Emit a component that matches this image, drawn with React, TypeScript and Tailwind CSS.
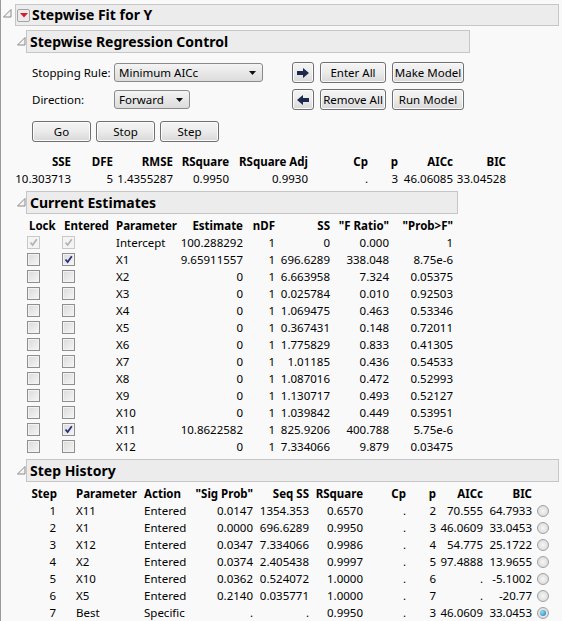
import React from 'react';

const statCols = 'grid grid-cols-[53px_42px_60px_56px_79px_60px_30px_55px_53px]';
const estCols = 'grid grid-cols-[35px_54px_68px_59px_32px_55px_59px_64px]';
const histCols = 'grid grid-cols-[30px_87px_56px_53px_56px_54px_43px_30px_47px_49px_17px]';

const estimates = [
  { name: 'Intercept', est: '100.288292', ss: '0', f: '0.000', p: '1', lock: 'disabled', entered: 'disabled' },
  { name: 'X1', est: '9.65911557', ss: '696.6289', f: '338.048', p: '8.75e-6', entered: 'on' },
  { name: 'X2', est: '0', ss: '6.663958', f: '7.324', p: '0.05375' },
  { name: 'X3', est: '0', ss: '0.025784', f: '0.010', p: '0.92503' },
  { name: 'X4', est: '0', ss: '1.069475', f: '0.463', p: '0.53346' },
  { name: 'X5', est: '0', ss: '0.367431', f: '0.148', p: '0.72011' },
  { name: 'X6', est: '0', ss: '1.775829', f: '0.833', p: '0.41305' },
  { name: 'X7', est: '0', ss: '1.01185', f: '0.436', p: '0.54533' },
  { name: 'X8', est: '0', ss: '1.087016', f: '0.472', p: '0.52993' },
  { name: 'X9', est: '0', ss: '1.130717', f: '0.493', p: '0.52127' },
  { name: 'X10', est: '0', ss: '1.039842', f: '0.449', p: '0.53951' },
  { name: 'X11', est: '10.8622582', ss: '825.9206', f: '400.788', p: '5.75e-6', entered: 'on' },
  { name: 'X12', est: '0', ss: '7.334066', f: '9.879', p: '0.03475' },
];

const history = [
  ['1', 'X11', 'Entered', '0.0147', '1354.353', '0.6570', '.', '2', '70.555', '64.7933'],
  ['2', 'X1', 'Entered', '0.0000', '696.6289', '0.9950', '.', '3', '46.0609', '33.0453'],
  ['3', 'X12', 'Entered', '0.0347', '7.334066', '0.9986', '.', '4', '54.775', '25.1722'],
  ['4', 'X2', 'Entered', '0.0374', '2.405438', '0.9997', '.', '5', '97.4888', '13.9655'],
  ['5', 'X10', 'Entered', '0.0362', '0.524072', '1.0000', '.', '6', '.', '-5.1002'],
  ['6', 'X5', 'Entered', '0.2140', '0.035771', '1.0000', '.', '7', '.', '-20.77'],
  ['7', 'Best', 'Specific', '.', '.', '0.9950', '.', '3', '46.0609', '33.0453'],
];

function Disclosure() {
  return (
    <svg width="9" height="9" viewBox="0 0 9 9">
      <polygon points="8,0.5 8,8 0.5,8" fill="#f4f4f4" stroke="#8a8a8a" strokeWidth="1" />
    </svg>
  );
}

function RedMenu() {
  return (
    <div className="w-[13px] h-[13px] rounded-[2px] border border-[#a4a4a4] bg-[#ececec] flex items-center justify-center">
      <svg width="8" height="5" viewBox="0 0 8 5">
        <polygon points="0,0 8,0 4,4.5" fill="#d4202c" />
      </svg>
    </div>
  );
}

function Section({ title, width, children }: { title: string; width: string; children: React.ReactNode }) {
  return (
    <div>
      <div className="flex">
        <div className="w-[9px] pt-[7px]">
          <Disclosure />
        </div>
        <div className={`${width} h-[23px] flex items-center pl-[3px] border border-[#c6c6c6] bg-[#ececec]`}>
          <span className="font-bold text-[14px]">{title}</span>
        </div>
      </div>
      {children}
    </div>
  );
}

function Button({ children, w }: { children: React.ReactNode; w: string }) {
  return (
    <div className={`${w} h-[21px] flex items-center justify-center rounded-[3px] border border-[#707070] bg-linear-to-b from-[#f4f4f4] via-[#ebebeb] to-[#d8d8d8] shadow-[inset_0_0_0_1px_#fbfbfb]`}>
      {children}
    </div>
  );
}

function Select({ label, w }: { label: string; w: string }) {
  return (
    <div className={`${w} h-[19px] flex items-center justify-between pl-[4px] pr-[6px] rounded-[3px] border border-[#8a8a8a] bg-linear-to-b from-[#f4f4f4] to-[#dcdcdc]`}>
      <span>{label}</span>
      <svg width="7" height="4" viewBox="0 0 7 4">
        <polygon points="0,0 7,0 3.5,4" fill="#111" />
      </svg>
    </div>
  );
}

function Arrow({ left }: { left?: boolean }) {
  return (
    <svg width="12" height="10" viewBox="0 0 12 10" className={left ? 'scale-x-[-1]' : ''}>
      <polygon points="0,3 6,3 6,0 12,5 6,10 6,7 0,7" fill="#1b2a4c" />
    </svg>
  );
}

function Checkbox({ state }: { state?: string }) {
  const disabled = state === 'disabled';
  return (
    <div
      className={`w-[13px] h-[13px] flex items-center justify-center border ${
        disabled ? 'border-[#c8c8c8] bg-[#f4f4f4]' : 'border-[#8f8f8f] bg-linear-to-br from-[#dadada] to-[#f6f6f6] shadow-[inset_0_0_0_1px_#f2f2f2]'
      }`}
    >
      {state && (
        <svg width="9" height="9" viewBox="0 0 9 9">
          <path d="M1.5 4.5 L3.6 7 L7.8 1.2" fill="none" stroke={disabled ? '#b4b4b4' : '#27307a'} strokeWidth="1.8" />
        </svg>
      )}
    </div>
  );
}

function Radio({ on }: { on?: boolean }) {
  return (
    <div className="w-[12px] h-[12px] rounded-full border border-[#a0a0a0] bg-radial from-[#f6f6f6] to-[#d4d4d4] flex items-center justify-center">
      {on && <div className="w-[6px] h-[6px] rounded-full bg-radial-[at_35%_35%] from-[#8fe0f8] to-[#1b78a8]" />}
    </div>
  );
}

export default function App() {
  return (
    <div className="w-[562px] h-[621px] overflow-hidden bg-[#f9f9f9] shadow-[inset_1px_0_0_#9a9a9a] text-[11.5px] leading-none text-black font-['Noto_Sans',sans-serif]">
      <div className="pt-[4px]">
        {/* Outline title */}
        <div className="flex">
          <div className="w-[15px] pl-[3px] pt-[5px]">
            <Disclosure />
          </div>
          <div className="w-[544px] h-[22px] flex items-center gap-[2px] pl-[1px] border border-[#c6c6c6] bg-[#ececec]">
            <RedMenu />
            <span className="font-bold text-[14px]">Stepwise Fit for Y</span>
          </div>
        </div>

        <div className="pl-[17px] pt-[4px] flex flex-col gap-[4px]">
          <Section title="Stepwise Regression Control" width="w-[444px]">
            <div className="ml-[15px] mt-[9px]">
              <div className="flex">
                <div className="w-[260px]">
                  <div className="flex items-center h-[21px]">
                    <span className="w-[82px]">Stopping Rule:</span>
                    <Select label="Minimum AICc" w="w-[149px]" />
                  </div>
                  <div className="flex items-center h-[21px] mt-[6px]">
                    <span className="w-[82px]">Direction:</span>
                    <Select label="Forward" w="w-[76px]" />
                  </div>
                </div>
                <div className="flex flex-col gap-[6px]">
                  <div className="flex gap-[6px]">
                    <Button w="w-[22px]"><Arrow /></Button>
                    <Button w="w-[66px]">Enter All</Button>
                    <Button w="w-[72px]">Make Model</Button>
                  </div>
                  <div className="flex gap-[6px]">
                    <Button w="w-[22px]"><Arrow left /></Button>
                    <Button w="w-[66px]">Remove All</Button>
                    <Button w="w-[72px]">Run Model</Button>
                  </div>
                </div>
              </div>
              <div className="flex gap-[5px] mt-[11px]">
                <Button w="w-[59px]">Go</Button>
                <Button w="w-[59px]">Stop</Button>
                <Button w="w-[59px]">Step</Button>
              </div>
            </div>

            {/* Fit statistics */}
            <div className={`${statCols} ml-[1px] mt-[11px] text-right`}>
              {['SSE', 'DFE', 'RMSE', 'RSquare', 'RSquare Adj', 'Cp', 'p', 'AICc', 'BIC'].map((h) => (
                <div key={h} className="h-[17px] flex items-center justify-end font-bold whitespace-nowrap">{h}</div>
              ))}
              {['10.303713', '5', '1.4355287', '0.9950', '0.9930', '.', '3', '46.06085', '33.04528'].map((v, i) => (
                <div key={i} className="h-[17px] flex items-center justify-end whitespace-nowrap">{v}</div>
              ))}
            </div>
          </Section>

          <Section title="Current Estimates" width="w-[432px]">
            <div className={`${estCols} ml-[10px] mt-[3px]`}>
              <div className="h-[17px] flex items-center pl-[2px] font-bold">Lock</div>
              <div className="h-[17px] flex items-center pl-[2px] font-bold">Entered</div>
              <div className="h-[17px] flex items-center font-bold">Parameter</div>
              <div className="h-[17px] flex items-center justify-end font-bold">Estimate</div>
              <div className="h-[17px] flex items-center justify-end font-bold">nDF</div>
              <div className="h-[17px] flex items-center justify-end font-bold">SS</div>
              <div className="h-[17px] flex items-center justify-end font-bold whitespace-nowrap">{'"F Ratio"'}</div>
              <div className="h-[17px] flex items-center justify-end font-bold whitespace-nowrap">{'"Prob>F"'}</div>
              {estimates.map((r) => (
                <React.Fragment key={r.name}>
                  <div className="h-[17px] flex items-center"><Checkbox state={r.lock} /></div>
                  <div className="h-[17px] flex items-center"><Checkbox state={r.entered} /></div>
                  <div className="h-[17px] flex items-center">{r.name}</div>
                  <div className="h-[17px] flex items-center justify-end">{r.est}</div>
                  <div className="h-[17px] flex items-center justify-end">1</div>
                  <div className="h-[17px] flex items-center justify-end">{r.ss}</div>
                  <div className="h-[17px] flex items-center justify-end">{r.f}</div>
                  <div className="h-[17px] flex items-center justify-end">{r.p}</div>
                </React.Fragment>
              ))}
            </div>
          </Section>

          <Section title="Step History" width="w-[533px]">
            <div className={`${histCols} ml-[10px] mt-[3px]`}>
              <div className="h-[17px] flex items-center justify-end font-bold">Step</div>
              <div className="h-[17px] flex items-center pl-[19px] font-bold">Parameter</div>
              <div className="h-[17px] flex items-center font-bold">Action</div>
              <div className="h-[17px] flex items-center justify-end font-bold whitespace-nowrap">{'"Sig Prob"'}</div>
              <div className="h-[17px] flex items-center justify-end font-bold whitespace-nowrap">Seq SS</div>
              <div className="h-[17px] flex items-center justify-end font-bold">RSquare</div>
              <div className="h-[17px] flex items-center justify-end font-bold">Cp</div>
              <div className="h-[17px] flex items-center justify-end font-bold">p</div>
              <div className="h-[17px] flex items-center justify-end font-bold">AICc</div>
              <div className="h-[17px] flex items-center justify-end font-bold">BIC</div>
              <div className="h-[17px]" />
              {history.map((r, i) => (
                <React.Fragment key={r[0]}>
                  <div className="h-[17px] flex items-center justify-end pr-[1px]">{r[0]}</div>
                  <div className="h-[17px] flex items-center pl-[19px]">{r[1]}</div>
                  <div className="h-[17px] flex items-center">{r[2]}</div>
                  {r.slice(3).map((v, j) => (
                    <div key={j} className="h-[17px] flex items-center justify-end">{v}</div>
                  ))}
                  <div className="h-[17px] flex items-center justify-end">
                    <Radio on={i === history.length - 1} />
                  </div>
                </React.Fragment>
              ))}
            </div>
          </Section>
        </div>
      </div>
    </div>
  );
}
